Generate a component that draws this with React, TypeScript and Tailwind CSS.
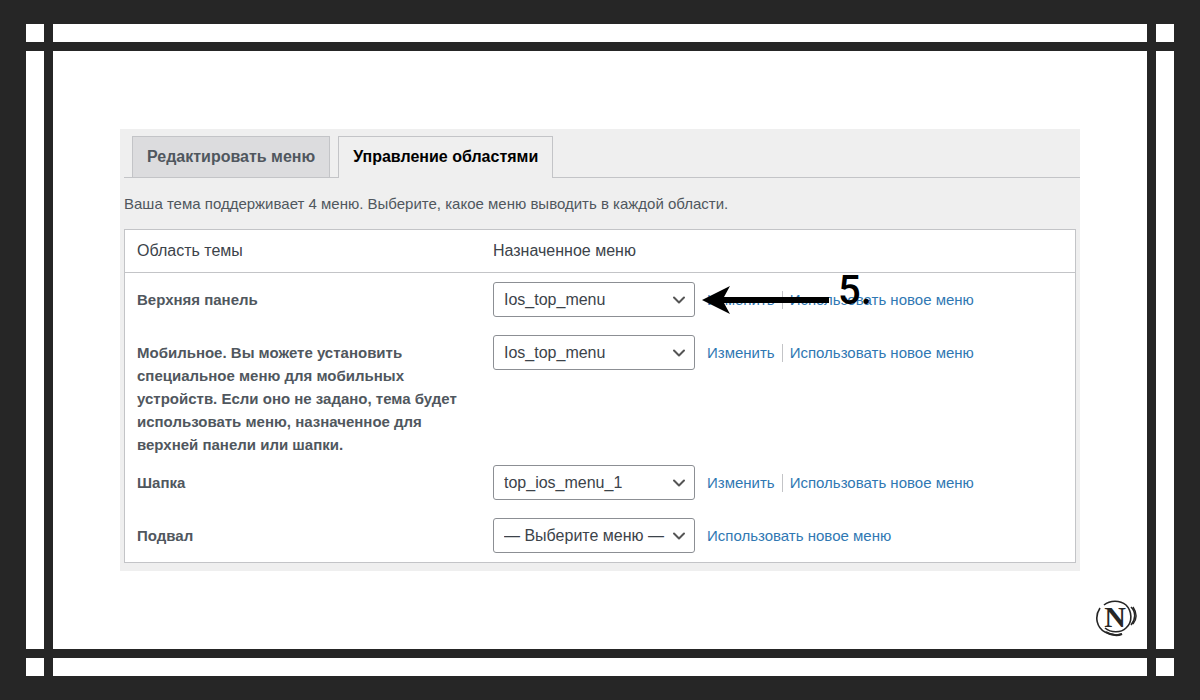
import { ChevronDown } from "lucide-react";

interface Location {
  id: string;
  name: string;
  selected: string;
  marked?: boolean;
}

const EMPTY = "— Выберите меню —";
const menus = [EMPTY, "Ios_top_menu", "top_ios_menu_1"];

const locations: Location[] = [
  { id: "top-bar", name: "Верхняя панель", selected: "Ios_top_menu", marked: true },
  {
    id: "mobile",
    name: "Мобильное. Вы можете установить специальное меню для мобильных устройств. Если оно не задано, тема будет использовать меню, назначенное для верхней панели или шапки.",
    selected: "Ios_top_menu",
  },
  { id: "header", name: "Шапка", selected: "top_ios_menu_1" },
  { id: "footer", name: "Подвал", selected: EMPTY },
];

function StepMarker() {
  return (
    <div className="pointer-events-none absolute left-[209px] top-0 flex text-black">
      <svg width="130" height="60" viewBox="0 0 130 60" aria-hidden="true">
        <path d="M0 27 L28 13 L22 24 H127 V30 H22 L28 41 Z" fill="currentColor" />
      </svg>
      <span className="ml-1.5 -mt-2 font-['Roboto',sans-serif] text-[40px] leading-[52px] font-medium">5.</span>
    </div>
  );
}

function MenuSelect({ id, selected }: { id: string; selected: string }) {
  return (
    <div className="relative w-[202px] shrink-0">
      <select
        id={id}
        defaultValue={selected}
        className="block h-[35px] w-full appearance-none rounded-[3px] border border-[#8c8f94] bg-white pl-2.5 pr-6 text-base text-[#3c434a]"
      >
        {menus.map((menu) => (
          <option key={menu}>{menu}</option>
        ))}
      </select>
      <ChevronDown className="pointer-events-none absolute right-1.5 top-2 size-5 text-[#555]" strokeWidth={2.4} />
    </div>
  );
}

function LocationRow({ id, name, selected, marked }: Location) {
  return (
    <tr className="align-top">
      <th scope="row" className="pt-[15px] pl-3 pr-4 text-left text-[15px] leading-[23px] font-bold text-[#50575e]">
        <label htmlFor={id} className="block max-w-[325px]">{name}</label>
      </th>
      <td className="relative py-[9px]">
        <div className="flex items-center">
          <MenuSelect id={id} selected={selected} />
          <div className="ml-3 flex items-center text-[15px] leading-[18px] whitespace-nowrap text-[#2f78b3]">
            {selected !== EMPTY && (
              <a href="#" className="mr-[7px] border-r border-[#c3c4c7] pr-[7px]">Изменить</a>
            )}
            <a href="#">Использовать новое меню</a>
          </div>
        </div>
        {marked && <StepMarker />}
      </td>
    </tr>
  );
}

function Logo() {
  return (
    <svg width="42" height="40" viewBox="0 0 42 40" className="mt-auto mr-2.5 mb-2.5 self-end text-[#262626]" aria-label="N">
      <g fill="none" stroke="currentColor">
        <path d="M9 6 C15 1 25 1 31 6 C37 12 38 23 31 29 C26 34 16 34 10 29" strokeWidth="1.6" />
        <path d="M5 9 C-1 18 2 29 10 33 C15 36 21 37 27 35" strokeWidth="1.6" />
        <path d="M11 33 C16 36 22 37 27 35" strokeWidth="2" />
        <path d="M36 8 C41 13 41 20 36 26" strokeWidth="1.6" />
        <path d="M38 8 C42 14 42 20 38 25" strokeWidth="1.4" />
      </g>
      <text x="20" y="28" textAnchor="middle" fontFamily="Liberation Serif, serif" fontSize="30" fontWeight="700" fill="currentColor">N</text>
    </svg>
  );
}

function MenuLocations() {
  return (
    <section className="mx-[67px] mt-[78px] bg-[#efefef] pt-[7px] pb-2 pl-1 font-['Liberation_Sans',sans-serif]">
      <nav className="flex gap-2 border-b border-[#c3c4c7] pl-2 text-base leading-6 font-bold">
        <a href="#" className="border border-b-0 border-[#c3c4c7] bg-[#dcdcde] px-3.5 py-2 text-[#50575e]">
          Редактировать меню
        </a>
        <a href="#" aria-current="page" className="-mb-px border border-b-0 border-[#c3c4c7] bg-[#efefef] px-3.5 py-2 text-black">
          Управление областями
        </a>
      </nav>
      <p className="mt-3.5 text-[15px] leading-6 text-[#50575e]">
        Ваша тема поддерживает 4 меню. Выберите, какое меню выводить в каждой области.
      </p>
      <div className="mt-[13px] mr-1 border border-[#c3c4c7] bg-white">
        <table className="w-full table-fixed">
          <colgroup>
            <col className="w-[368px]" />
            <col />
          </colgroup>
          <thead>
            <tr className="border-b border-[#c3c4c7] text-left text-base leading-[42px] text-[#3c434a]">
              <th scope="col" className="pl-3 font-normal">Область темы</th>
              <th scope="col" className="font-normal">Назначенное меню</th>
            </tr>
          </thead>
          <tbody>
            {locations.map((location) => (
              <LocationRow key={location.id} {...location} />
            ))}
          </tbody>
        </table>
      </div>
    </section>
  );
}

export default function App() {
  return (
    <div className="grid min-h-screen grid-cols-[18px_1fr_18px] grid-rows-[18px_1fr_18px] gap-[9px] bg-[#262626] px-[26px] py-6">
      <div className="bg-white" />
      <div className="bg-white" />
      <div className="bg-white" />
      <div className="bg-white" />
      <main className="flex flex-col bg-white">
        <MenuLocations />
        <Logo />
      </main>
      <div className="bg-white" />
      <div className="bg-white" />
      <div className="bg-white" />
      <div className="bg-white" />
    </div>
  );
}
